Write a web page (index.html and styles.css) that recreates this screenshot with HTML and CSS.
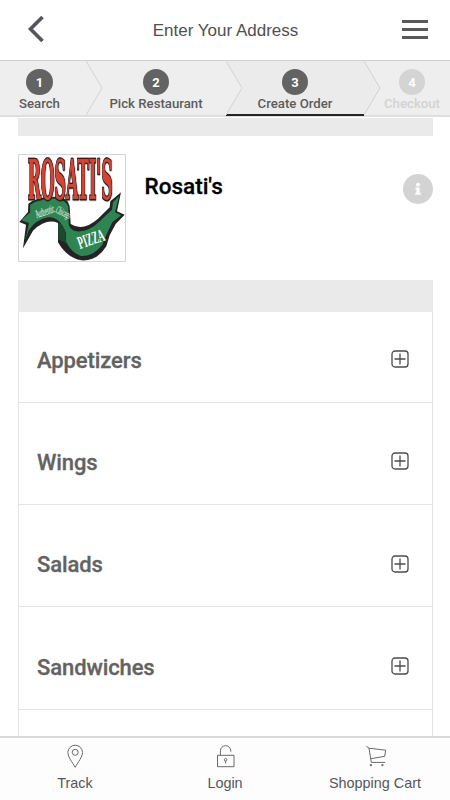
FILE: index.html
```html
<!DOCTYPE html>
<html lang="en">
<head>
<meta charset="utf-8">
<meta name="viewport" content="width=device-width, initial-scale=1">
<title>Rosati's</title>
<link rel="stylesheet" href="styles.css">
</head>
<body>
<div class="app">
  <header class="topbar">
    <svg class="back" viewBox="0 0 18 28" width="18" height="28"><path d="M15.5 2 3.5 14 15.5 26" fill="none" stroke="#55565a" stroke-width="3.6"/></svg>
    <h1 class="title">Enter Your Address</h1>
    <div class="burger"><span></span><span></span><span></span></div>
  </header>
  <nav class="steps">
    <div class="step first"><span class="num">1</span><span class="label">Search</span></div>
    <div class="step second"><svg class="chev" viewBox="0 0 17 54" width="17" height="54"><path d="M0 0 16 27 0 54" /></svg><span class="num">2</span><span class="label">Pick Restaurant</span></div>
    <div class="step active"><svg class="chev" viewBox="0 0 17 54" width="17" height="54"><path d="M0 0 16 27 0 54" /></svg><span class="num">3</span><span class="label">Create Order</span></div>
    <div class="step last"><svg class="chev" viewBox="0 0 17 54" width="17" height="54"><path class="fill-active" d="M0 0 16 27 0 54" /></svg><span class="num">4</span><span class="label">Checkout</span></div>
  </nav>
  <main class="content">
    <div class="strip"></div>
    <section class="restaurant">
      <svg class="logo" viewBox="28 31 318 318">
        <path d="M29 232 55 202 56 177Q90 153 140 157Q176 158 180 185L183 238Q220 262 265 222L300 188 302 170 334 143 322 200 345 210 318 238 300 272 290 305Q262 350 215 347Q172 340 145 293L145 235Q110 220 70 258L40 311 49 240Z" fill="#252326"/>
        <path d="M35 227 62 203 61 181Q92 160 137 162Q172 165 176 188L177 238Q178 252 196 259Q234 266 270 230L307 195 310 173 328 155 316 203 334 212 308 233 290 270 278 300Q250 336 215 334Q186 325 169 291L169 265Q150 215 115 218Q78 225 57 257L47 286 58 235Z" fill="#2f8551"/>
        <path d="M146 284 145 235Q160 239 167 264L169 295Z" fill="#1b4930"/>
        <text class="wordmark" x="0" y="0" transform="translate(54 162) scale(.319 1)">ROSATI'S</text>
        <text class="ribbon" font-size="36" transform="translate(81 221) rotate(-19) scale(.42 1)">Authentic</text>
        <text class="ribbon" font-size="32" transform="translate(136 203) rotate(25) scale(.44 1)">Chicago</text>
        <text class="ribbon bold" font-size="54" transform="translate(211 313) rotate(-19) scale(.5 1)">PIZZA</text>
      </svg>
      <h2 class="name">Rosati's</h2>
      <svg class="info" viewBox="0 0 30 30" width="30" height="30"><circle cx="15" cy="15" r="15" fill="#d3d3d3"/><circle cx="15" cy="10.7" r="1.9" fill="#fff"/><path d="M12.4 13.4H16.6V18.8H17.8V20.8H12.3V18.8H13.5V15.4H12.4Z" fill="#fff"/></svg>
    </section>
    <section class="menu">
      <div class="menu-head"></div>
      <div class="row"><span>Appetizers</span><svg class="plus" viewBox="0 0 18 18"><rect x="1" y="1" width="16" height="16" rx="3"/><path d="M3.5 9H14.5M9 3.5V14.5"/></svg></div>
      <div class="row"><span>Wings</span><svg class="plus" viewBox="0 0 18 18"><rect x="1" y="1" width="16" height="16" rx="3"/><path d="M3.5 9H14.5M9 3.5V14.5"/></svg></div>
      <div class="row"><span>Salads</span><svg class="plus" viewBox="0 0 18 18"><rect x="1" y="1" width="16" height="16" rx="3"/><path d="M3.5 9H14.5M9 3.5V14.5"/></svg></div>
      <div class="row"><span>Sandwiches</span><svg class="plus" viewBox="0 0 18 18"><rect x="1" y="1" width="16" height="16" rx="3"/><path d="M3.5 9H14.5M9 3.5V14.5"/></svg></div>
      <div class="row"></div>
    </section>
  </main>
  <footer class="tabs">
    <div class="tab"><svg viewBox="0 0 24 26"><path d="M12.2 24.3C9.5 19.5 4.9 14 4.9 9.5A7.3 7.3 0 0 1 19.5 9.5C19.5 14 14.7 19.5 12.2 24.3Z"/><circle cx="12.2" cy="9.3" r="3"/></svg><span>Track</span></div>
    <div class="tab"><svg viewBox="0 0 24 26"><path d="M4.5 12.3H21V23.7H4.5ZM7.4 12.3V7.9A5.2 5.2 0 0 1 17.8 7.9V8.7M12.6 18V20.5"/><circle cx="12.6" cy="16.8" r="1.3"/></svg><span>Login</span></div>
    <div class="tab"><svg viewBox="0 0 24 26"><path d="M3.3 3.2 6 5.2 22.7 7.2 21.7 13.3 7.5 15.8M6 5.2 8.3 19.4H22"/><circle class="wheel" cx="7.9" cy="22.2" r="1.1"/><circle class="wheel" cx="19.4" cy="22.2" r="1.1"/></svg><span>Shopping Cart</span></div>
  </footer>
</div>
</body>
</html>
```
FILE: styles.css
```css
* { box-sizing: border-box; }
body { margin: 0; background: #fff; font-family: Roboto, sans-serif; color: #55565a; }
.app { height: 800px; display: flex; flex-direction: column; overflow: hidden; }
.topbar { flex: none; height: 60px; display: flex; align-items: center; justify-content: space-between; padding: 0 22px 0 27px; }
.back { margin-bottom: 3px; }
.title { margin: 1px 0 0 4px; font: 400 17px/20px "Liberation Sans", Arial, sans-serif; color: #505052; }
.burger { width: 26px; display: flex; flex-direction: column; gap: 5.5px; margin-bottom: 1px; }
.burger span { height: 2.4px; background: #5a5a5c; }
.steps { flex: none; height: 57px; display: flex; background: #eee; border-top: 1px solid #d0d0d0; border-bottom: 2px solid #dedede; }
.step { position: relative; display: flex; flex-direction: column; align-items: center; padding-top: 7.5px; }
.first { width: 86px; padding-right: 7px; }
.second { width: 140px; }
.active { width: 138px; height: 55px; background: #ebebeb; border-bottom: 2px solid #222426; }
.last { width: 86px; padding-left: 10px; }
.chev { position: absolute; left: 0; top: 0; }
.chev path { fill: #eee; stroke: #d2d2d2; stroke-width: 1; }
.chev .fill-active { fill: #ebebeb; }
.num { width: 26.5px; height: 26.5px; border-radius: 50%; background: #636363; color: #fff; font-size: 13px; font-weight: 700; line-height: 28px; text-align: center; }
.label { margin-top: 1px; font-size: 13.2px; font-weight: 500; line-height: 16px; white-space: nowrap; position: relative; color: #5c5c5c; }
.last .num { background: #d4d4d4; }
.last .label { color: #d2d2d2; }
.content { flex: 1; min-height: 0; overflow: hidden; padding: 1px 17px 0 18px; }
.strip { height: 18px; background: #eaeaea; }
.restaurant { display: flex; align-items: flex-start; padding: 18px 0; height: 144px; }
.logo { width: 108px; height: 108px; border: 1px solid #d5d5d5; font-family: "Liberation Serif", serif; }
.wordmark { font: 700 165px "DejaVu Serif Condensed", "DejaVu Serif", serif; font-stretch: condensed; fill: #d54332; stroke: #252326; stroke-width: 7; paint-order: stroke; filter: drop-shadow(2px 1px 0 #252326); }
.ribbon { fill: #fff; }
.bold { font-weight: 700; }
.name { flex: 1; margin: 19px 0 0 18.5px; font-size: 22.5px; font-weight: 500; line-height: 27px; color: #000; -webkit-text-stroke: .3px; }
.info { margin-top: 20px; }
.menu { border: 1px solid #e4e4e4; border-top: 0; }
.menu-head { height: 32px; margin: 0 -1px; background: #eaeaea; }
.row { height: 102.25px; border-bottom: 1px solid #e4e4e4; padding: 18.5px 23.5px 0 18px; display: flex; align-items: center; justify-content: space-between; font-size: 22px; letter-spacing: -.1px; font-weight: 500; color: #626262; -webkit-text-stroke: .3px; }
.menu-head + .row { height: 90.8px; padding-top: 7px; }
.plus { width: 18px; height: 18px; fill: none; stroke: #4c4c4e; stroke-width: 1.3; margin-top: -2.5px; }
.tabs { flex: none; height: 64px; display: grid; grid-template-columns: repeat(3, 1fr); background: #fdfdfd; border-top: 2px solid #d9d9d9; }
.tab { display: flex; flex-direction: column; align-items: center; padding-top: 5px; font: 14.4px/20px "Liberation Sans", Arial, sans-serif; }
.tab span { margin-top: 4px; }
.tab svg { width: 24px; height: 26px; fill: none; stroke: #6a6a6c; stroke-width: 1; }
.tab .wheel { fill: #6a6a6c; stroke: none; }
```
